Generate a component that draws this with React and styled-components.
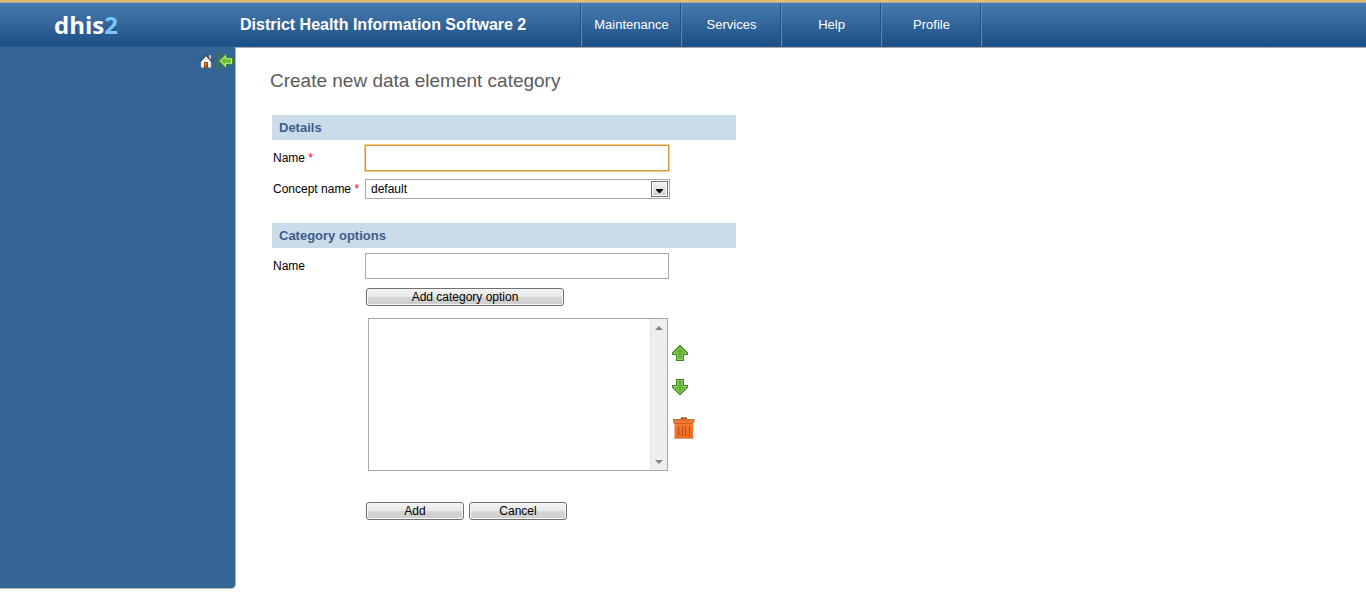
import React, { useState } from "react"
import styled, { createGlobalStyle } from "styled-components"

const menuItems = ['Maintenance', 'Services', 'Help', 'Profile']

const HomeIcon = () => (
  <svg width="14" height="14" viewBox="0 0 14 14" aria-hidden="true">
    <path d="M10 1h2v5h-2z" fill="#f5eee8" stroke="#7a5548" strokeWidth="0.5" />
    <path d="M2 7.5L7 2l5 5.5V13.5H2z" fill="#f4f4f2" stroke="#a9a9a9" strokeWidth="0.5" />
    <path d="M0.5 8.2L7 1.2l6.5 7" fill="none" stroke="#44484c" strokeWidth="1.2" />
    <path d="M5 8h4v6H5z" fill="#8c4a18" />
    <path d="M6 9h2v2H6z" fill="#e0771c" />
    <path d="M6 11h2v2H6z" fill="#c4560f" />
  </svg>
)

const HideIcon = () => (
  <svg width="16" height="16" viewBox="0 0 16 16" aria-hidden="true">
    <path d="M0 0h2v16H0z" fill="#447a28" />
    <path d="M1.5 8L8.5 1h1v3.5H16v7H9.5V15h-1z" fill="#4c8f26" />
    <path d="M2.5 8L9 1.7v3.6h6v5.4H9v3.6z" fill="#c4e8a4" />
    <path d="M4 8l4-4v2.3h6v3.4H8V12z" fill="#6cc02c" />
  </svg>
)

const MoveIcon = ({ down }) => (
  <svg width="16" height="16" viewBox="0 0 16 16" aria-hidden="true">
    <g transform={down ? 'rotate(180 8 8)' : undefined}>
      <path d="M7.5 0h1L16 7.5V10h-4v6H4v-6H0V7.5z" fill="#3d8420" />
      <path d="M8 1.2l6.8 6.8v1H11v6H5V9H1.2V8z" fill="#96cc6e" />
      <path d="M8 2.5l5.2 5.5H10v6.2H6V8H2.8z" fill="#66b432" />
    </g>
  </svg>
)

const TrashIcon = () => (
  <svg width="22" height="23" viewBox="0 0 22 23" aria-hidden="true">
    <defs>
      <linearGradient id="bin" x1="0" y1="0" x2="0" y2="1">
        <stop offset="0" stopColor="#fb7a2c" />
        <stop offset="1" stopColor="#ec6c26" />
      </linearGradient>
    </defs>
    <path d="M1 21h20v1H1z" fill="#c9cdd0" />
    <path d="M1.5 6h18.5v15.5H1.5z" fill="url(#bin)" />
    <path d="M0 2.5h21.5V6H0z" fill="#f67a2e" />
    <path d="M1 6h19v1H1z" fill="#cf5f28" />
    <path d="M0 2h21.5v1H0z" fill="#a8764f" />
    <path d="M8 2.5V0.8h5.5v1.7" fill="#d9662c" stroke="#a95b33" />
    <path d="M5 9h1v10H5zM9 9h1v10H9zM12 9h1v10h-1zM16 9h1v10h-1z" fill="#b84a18" />
  </svg>
)

export default function App() {
  const [name, setName] = useState('')
  const [optionName, setOptionName] = useState('')
  const [options, setOptions] = useState([])

  const addOption = () => {
    if (!optionName) return
    setOptions([...options, optionName])
    setOptionName('')
  }

  return (
    <Page>
      <GlobalStyle />
      <Header>
        <Logo href="#">dhis<span>2</span></Logo>
        <AppTitle>District Health Information Software 2</AppTitle>
        <Menu>
          {menuItems.map((item) => <MenuLink href="#" key={item}>{item}</MenuLink>)}
        </Menu>
      </Header>
      <Body>
        <Sidebar>
          <SidebarLink href="#" aria-label="Home"><HomeIcon /></SidebarLink>
          <IconButton type="button" aria-label="Hide menu"><HideIcon /></IconButton>
        </Sidebar>
        <Main>
          <Heading>Create new data element category</Heading>
          <Form onSubmit={(e) => e.preventDefault()}>
            <SectionTitle>Details</SectionTitle>
            <Row $gap={5}>
              <Label htmlFor="name">Name <Required>*</Required></Label>
              <TextInput id="name" $active value={name} onChange={(e) => setName(e.target.value)} />
            </Row>
            <Row $gap={8}>
              <Label htmlFor="concept">Concept name <Required>*</Required></Label>
              <SelectWrap>
                <Select id="concept" defaultValue="default">
                  <option value="default">default</option>
                </Select>
                <DropArrow>
                  <svg width="7" height="4" viewBox="0 0 7 4"><path d="M0 0h7v1L4 4H3L0 1z" fill="#000" /></svg>
                </DropArrow>
              </SelectWrap>
            </Row>

            <SectionTitle $spaced>Category options</SectionTitle>
            <Row $gap={5}>
              <Label htmlFor="option">Name</Label>
              <TextInput id="option" value={optionName} onChange={(e) => setOptionName(e.target.value)} />
            </Row>
            <Actions $gap={9}>
              <Button type="button" $wide onClick={addOption}>Add category option</Button>
            </Actions>
            <ListRow>
              <ListBox>
                <List multiple aria-label="Category options">
                  {options.map((option, i) => <option key={i}>{option}</option>)}
                </List>
                <ScrollRail aria-hidden="true">
                  <svg width="8" height="4" viewBox="0 0 8 4"><path d="M4 0l4 4H0z" fill="#858585" /></svg>
                  <svg width="8" height="4" viewBox="0 0 8 4"><path d="M0 0h8L4 4z" fill="#858585" /></svg>
                </ScrollRail>
              </ListBox>
              <ListTools>
                <IconButton type="button" aria-label="Move up"><MoveIcon /></IconButton>
                <IconButton type="button" aria-label="Move down"><MoveIcon down /></IconButton>
                <IconButton type="button" aria-label="Delete"><TrashIcon /></IconButton>
              </ListTools>
            </ListRow>
            <Actions $gap={31}>
              <Button type="submit">Add</Button>
              <Button type="button">Cancel</Button>
            </Actions>
          </Form>
        </Main>
      </Body>
    </Page>
  )
}

const GlobalStyle = createGlobalStyle`
  * {
    box-sizing: border-box;
  }
  body {
    margin: 0;
    background-color: #ffffff;
    font-family: "Liberation Sans", Arial, sans-serif;
    font-size: 12px;
    color: #000000;
  }
`

const Page = styled.div`
  display: flex;
  flex-direction: column;
  min-height: 100vh;
  padding-bottom: 9px;
`

const Header = styled.header`
  display: flex;
  height: 47px;
  border-top: 2px solid #e6bd6c;
  background: linear-gradient(#a9a9a3 1px, #487bae 1px, #1d5087 43px, #1b4f85 43px, #245a92);
`

const Logo = styled.a`
  width: 240px;
  padding-left: 54px;
  font-family: "Open Sans", sans-serif;
  font-size: 24px;
  font-weight: 700;
  line-height: 45px;
  color: #ffffff;
  text-decoration: none;
  span {
    color: #7cc4ff;
  }
`

const AppTitle = styled.div`
  width: 341px;
  font-size: 16px;
  font-weight: 700;
  line-height: 46px;
  color: #ffffff;
  white-space: nowrap;
`

const Menu = styled.nav`
  display: flex;
  margin-top: 1px;
  margin-bottom: 1px;
  border-left: 1px solid #5f8cb8;
  box-shadow: -1px 0 #234f7e;
`

const MenuLink = styled.a`
  width: 100px;
  border-right: 1px solid #5f8cb8;
  box-shadow: inset -1px 0 #234f7e;
  font-size: 13px;
  line-height: 43px;
  text-align: center;
  color: #ffffff;
  text-decoration: none;
`

const Body = styled.div`
  display: flex;
  flex: 1;
`

const Sidebar = styled.aside`
  display: flex;
  justify-content: flex-end;
  align-items: flex-start;
  gap: 4px;
  width: 236px;
  padding: 6px 2px 0 0;
  border-right: 1px solid #b5b5b5;
  border-bottom: 1px solid #b5b5b5;
  border-bottom-right-radius: 5px;
  background-color: #356594;
`

const SidebarLink = styled.a`
  display: flex;
  padding-top: 1px;
`

const IconButton = styled.button`
  display: flex;
  padding: 0;
  border: none;
  background: none;
  cursor: pointer;
`

const Main = styled.main`
  flex: 1;
  padding: 20px 34px;
  border-top: 1px solid #a9a9a9;
`

const Heading = styled.h1`
  margin: 0 0 21px;
  font-size: 19px;
  font-weight: 400;
  line-height: 26px;
  color: #5b5b5b;
`

const Form = styled.form`
  max-width: 466px;
  padding-left: 2px;
`

const SectionTitle = styled.h2`
  margin: ${({ $spaced }) => ($spaced ? '24px' : 0)} 0 0;
  padding-left: 7px;
  background-color: #cadcea;
  font-size: 13px;
  font-weight: 700;
  line-height: 25px;
  color: #3f5d8b;
`

const Row = styled.div`
  display: flex;
  align-items: center;
  margin-top: ${({ $gap }) => $gap}px;
`

const Label = styled.label`
  width: 93px;
  padding-left: 1px;
  white-space: nowrap;
`

const Required = styled.span`
  color: #ff0033;
`

const TextInput = styled.input`
  width: 304px;
  height: 26px;
  padding: 0 5px;
  border: 1px solid ${({ $active }) => ($active ? '#cc9a45' : '#aaaaaa')};
  box-shadow: ${({ $active }) => ($active ? '0 0 0 1px #f7cd83' : 'none')};
  outline: none;
  font: inherit;
`

const SelectWrap = styled.div`
  position: relative;
  width: 305px;
`

const Select = styled.select`
  display: block;
  appearance: none;
  width: 100%;
  height: 20px;
  padding: 0 20px 0 5px;
  border: 1px solid #aaaaaa;
  border-radius: 0;
  background-color: #ffffff;
  font: inherit;
  color: inherit;
`

const DropArrow = styled.span`
  position: absolute;
  top: 2px;
  right: 2px;
  display: flex;
  justify-content: center;
  align-items: flex-end;
  width: 17px;
  height: 16px;
  padding-bottom: 3px;
  border: 1px solid #707070;
  box-shadow: inset 0 0 0 1px #ffffff;
  background: linear-gradient(#f4f4f4, #cfcfcf);
  pointer-events: none;
`

const Actions = styled.div`
  display: flex;
  gap: 5px;
  margin-top: ${({ $gap }) => $gap}px;
  padding-left: 94px;
`

const Button = styled.button`
  width: ${({ $wide }) => ($wide ? 198 : 98)}px;
  height: 18px;
  padding: 0;
  border: 1px solid #707070;
  border-radius: 3px;
  box-shadow: inset 0 0 0 1px #f8f8f8;
  background: linear-gradient(#f2f2f2, #e8e8e8 50%, #d6d6d6 50%, #cccccc);
  font: inherit;
  line-height: 16px;
  color: #000000;
`

const ListRow = styled.div`
  display: flex;
  margin-top: 12px;
  padding-left: 96px;
`

const ListBox = styled.div`
  display: flex;
  width: 300px;
  height: 153px;
  border: 1px solid #aaaaaa;
`

const List = styled.select`
  flex: 1;
  padding: 0;
  border: none;
  outline: none;
  background-color: #ffffff;
  font: inherit;
  scrollbar-width: none;
`

const ScrollRail = styled.div`
  display: flex;
  flex-direction: column;
  justify-content: space-between;
  align-items: center;
  width: 17px;
  padding: 7px 0 6px;
  border-left: 1px solid #e6e6e6;
  background-color: #eeeeee;
`

const ListTools = styled.div`
  display: flex;
  flex-direction: column;
  gap: 18px;
  padding: 27px 0 0 4px;
  button:last-child {
    margin-top: 4px;
    margin-left: 1px;
  }
`
